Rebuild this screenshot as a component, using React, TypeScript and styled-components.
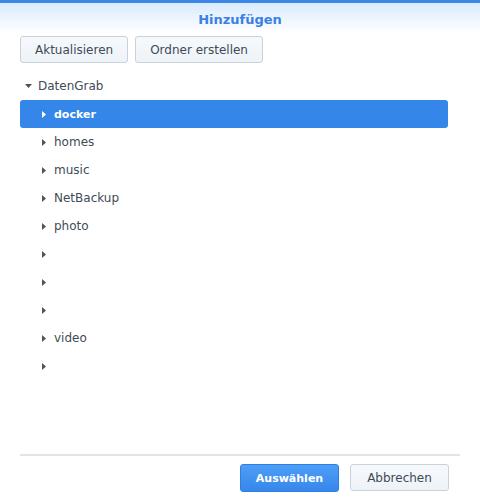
import React from 'react';
import styled, { createGlobalStyle } from 'styled-components';

const GlobalStyle = createGlobalStyle`
  html, body {
    margin: 0;
    padding: 0;
    background: #ffffff;
  }
  body {
    font-family: 'DejaVu Sans', Verdana, sans-serif;
    font-size: 12px;
    color: #414b55;
  }
`;

const Dialog = styled.div`
  width: 480px;
  height: 500px;
  display: flex;
  flex-direction: column;
  box-sizing: border-box;
  background: #fff;
`;

const Header = styled.header`
  height: 33px;
  box-sizing: border-box;
  border-top: 3px solid #3a87e8;
  background: linear-gradient(to bottom, #d8ebfc 0%, #ecf5fe 50%, #ffffff 100%);
  display: flex;
  align-items: center;
  justify-content: center;
  padding-top: 2px;
`;

const Title = styled.h1`
  margin: 0;
  font-size: 13px;
  font-weight: bold;
  color: #3b7fe6;
`;

const Toolbar = styled.div`
  display: flex;
  gap: 7px;
  padding: 3px 20px 0;
`;

const Button = styled.button<{ $primary?: boolean }>`
  height: ${(p) => (p.$primary ? '28px' : '27px')};
  padding: 0 14px;
  box-sizing: border-box;
  border-radius: 3px;
  font-family: 'DejaVu Sans', Verdana, sans-serif;
  font-size: ${(p) => (p.$primary ? '11px' : '12px')};
  font-weight: ${(p) => (p.$primary ? 'bold' : 'normal')};
  color: ${(p) => (p.$primary ? '#ffffff' : '#404a56')};
  border: 1px solid ${(p) => (p.$primary ? '#2f7fe2' : '#c9d1db')};
  background: ${(p) =>
    p.$primary
      ? 'linear-gradient(to bottom, #4d9ef6, #3787ec)'
      : 'linear-gradient(to bottom, #f6f9fc, #eef3f8)'};
  cursor: pointer;
`;

const FooterButton = styled(Button)`
  width: 99px;
  padding: 0;
`;

const Tree = styled.ul`
  list-style: none;
  margin: 9px 0 0;
  padding: 0 32px 0 20px;
  flex: 1;
`;

const Row = styled.li<{ $depth: number; $selected?: boolean }>`
  height: 28px;
  display: flex;
  align-items: center;
  padding-left: ${(p) => (p.$depth === 0 ? 5 : 22)}px;
  border-radius: 3px;
  background: ${(p) => (p.$selected ? '#3486e8' : 'transparent')};
  color: ${(p) => (p.$selected ? '#ffffff' : '#414b55')};
  font-weight: ${(p) => (p.$selected ? 'bold' : 'normal')};
  font-size: ${(p) => (p.$selected ? '11px' : '12px')};
`;

const Toggle = styled.span<{ $open?: boolean }>`
  display: inline-flex;
  width: ${(p) => (p.$open ? 8 : 12)}px;
  margin-right: ${(p) => (p.$open ? 5 : 0)}px;
  svg {
    display: block;
  }
`;

const Footer = styled.footer`
  margin: 0 20px;
  border-top: 2px solid #e4e4e4;
  padding: 8px 11px 8px 0;
  display: flex;
  justify-content: flex-end;
  gap: 11px;
`;

const Arrow = ({ open, color }: { open?: boolean; color: string }) =>
  open ? (
    <svg width="7" height="4" viewBox="0 0 7 4">
      <path d="M0 0 H7 L3.5 4 Z" fill={color} />
    </svg>
  ) : (
    <svg width="4" height="7" viewBox="0 0 4 7">
      <path d="M0 0 L4 3.5 L0 7 Z" fill={color} />
    </svg>
  );

const folders = [
  'docker',
  'homes',
  'music',
  'NetBackup',
  'photo',
  '',
  '',
  '',
  'video',
  '',
];

const App = () => {
  return (
    <>
      <GlobalStyle />
      <Dialog>
        <Header>
          <Title>Hinzufügen</Title>
        </Header>
        <Toolbar>
          <Button>Aktualisieren</Button>
          <Button>Ordner erstellen</Button>
        </Toolbar>
        <Tree>
          <Row $depth={0}>
            <Toggle $open>
              <Arrow open color="#4b5560" />
            </Toggle>
            DatenGrab
          </Row>
          {folders.map((name, i) => (
            <Row key={i} $depth={1} $selected={i === 0}>
              <Toggle>
                <Arrow color={i === 0 ? '#ffffff' : '#4b5560'} />
              </Toggle>
              {name}
            </Row>
          ))}
        </Tree>
        <Footer>
          <FooterButton $primary>Auswählen</FooterButton>
          <FooterButton>Abbrechen</FooterButton>
        </Footer>
      </Dialog>
    </>
  );
};

export default App;
